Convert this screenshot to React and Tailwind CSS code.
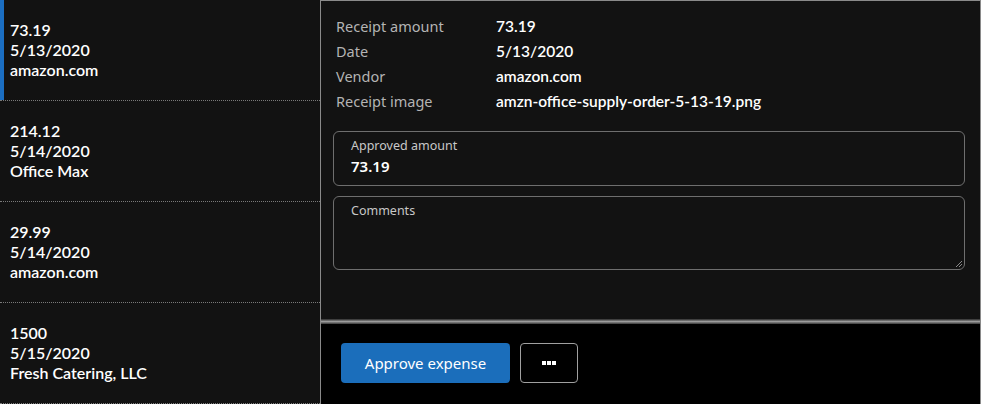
import React from 'react';

const receipts = [
  { amount: '73.19', date: '5/13/2020', vendor: 'amazon.com', active: true },
  { amount: '214.12', date: '5/14/2020', vendor: 'Office Max' },
  { amount: '29.99', date: '5/14/2020', vendor: 'amazon.com' },
  { amount: '1500', date: '5/15/2020', vendor: 'Fresh Catering, LLC' },
];

const details = [
  ['Receipt amount', '73.19'],
  ['Date', '5/13/2020'],
  ['Vendor', 'amazon.com'],
  ['Receipt image', 'amzn-office-supply-order-5-13-19.png'],
];

const valueFont = { fontFamily: 'Lato, "Noto Sans", sans-serif' };

const App = () => {
  return (
    <div className="flex h-[404px] w-[981px] bg-black overflow-hidden" style={{ fontFamily: '"Noto Sans", "Open Sans", sans-serif' }}>
      {/* receipt list */}
      <div className="w-[320px] shrink-0 bg-[#121212] flex flex-col">
        {receipts.map((r, i) => (
          <div
            key={i}
            className="h-[101px] shrink-0 flex border-b border-dotted border-[#7a7a7a]"
          >
            <div className={`w-[4px] h-full ${r.active ? 'bg-[#1b6ec2]' : ''}`} />
            <div className="pl-[6px] pt-[20px] text-white text-[16px] font-semibold leading-[20px]" style={valueFont}>
              <div>{r.amount}</div>
              <div>{r.date}</div>
              <div>{r.vendor}</div>
            </div>
          </div>
        ))}
      </div>

      {/* detail panel */}
      <div className="flex-1 flex flex-col border border-[#8a8a8a] border-b-0">
        <div className="h-[318px] bg-[#121212] pl-[12px] pr-[15px] pt-[13px]">
          <div className="grid grid-cols-[160px_1fr] pl-[3px] leading-[25px]">
            {details.map(([label, value]) => (
              <React.Fragment key={label}>
                <div className="text-[14.5px] text-[#b4b4b4]">{label}</div>
                <div className="text-[15.5px] font-semibold text-white" style={valueFont}>{value}</div>
              </React.Fragment>
            ))}
          </div>

          <div className="mt-[17px] h-[55px] rounded-[6px] border border-[#6e6e6e] px-[17px] pt-[6px]">
            <div className="text-[12.5px] leading-[16px] text-[#c8c8c8]">Approved amount</div>
            <div className="text-[15px] leading-[25px] font-semibold text-white">73.19</div>
          </div>

          <div className="relative mt-[10px] h-[74px] rounded-[6px] border border-[#6e6e6e] px-[17px] pt-[6px]">
            <div className="text-[12.5px] leading-[16px] text-[#c8c8c8]">Comments</div>
            <svg className="absolute right-[1px] bottom-[1px]" width="8" height="8" viewBox="0 0 8 8">
              <path d="M7 1 L1 7 M7 4 L4 7" stroke="#8a8a8a" strokeWidth="1" />
            </svg>
          </div>
        </div>

        <div className="h-[5px] bg-gradient-to-b from-[#2a2a2a] via-[#9c9c9c] to-[#3a3a3a]" />

        <div className="flex-1 bg-black flex items-start gap-[10px] pl-[20px] pt-[19px]">
          <button className="h-[40px] w-[169px] rounded-[4px] bg-[#1b6ebb] text-white text-[15px]" style={{ fontFamily: '"Noto Sans", sans-serif' }}>
            Approve expense
          </button>
          <button className="h-[40px] w-[58px] rounded-[4px] border border-[#a0a0a0] bg-black flex items-center justify-center gap-[1px]">
            <span className="block w-[4px] h-[4px] bg-white" />
            <span className="block w-[4px] h-[4px] bg-white" />
            <span className="block w-[4px] h-[4px] bg-white" />
          </button>
        </div>
      </div>
    </div>
  );
};

export default App;
